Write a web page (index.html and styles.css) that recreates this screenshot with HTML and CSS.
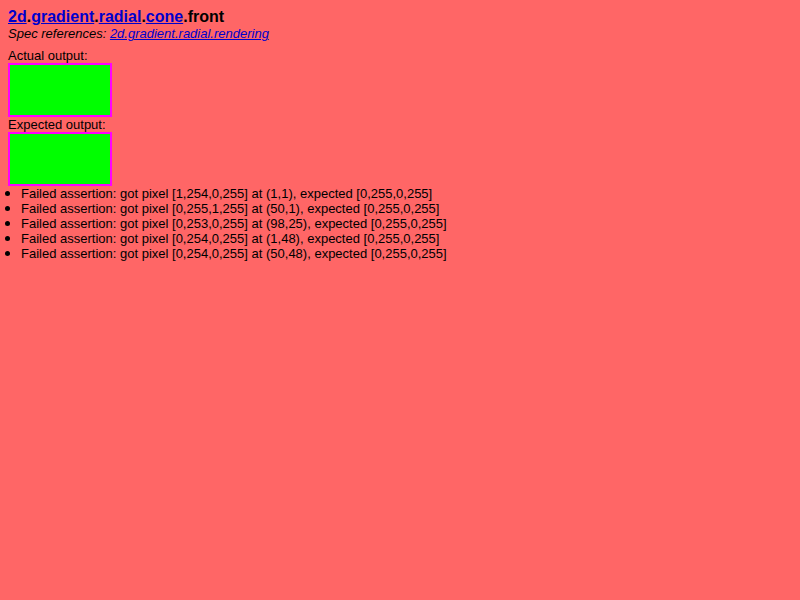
FILE: index.html
```
<!DOCTYPE html>
<html class="fail">
<head>
<meta charset="utf-8">
<title>Canvas test: 2d.gradient.radial.cone.front</title>
<link rel="stylesheet" href="styles.css">
</head>
<body class="show">
<h1><a href="#">2d</a>.<a href="#">gradient</a>.<a href="#">radial</a>.<a href="#">cone</a>.front</h1>
<div class="refs">Spec references: <ul><li><a href="#">2d.gradient.radial.rendering</a></li></ul></div>
<p class="output">Actual output:</p>
<div class="canvas"></div>
<p class="output">Expected output:</p>
<div class="canvas"></div>
<ul class="results">
<li>Failed assertion: got pixel [1,254,0,255] at (1,1), expected [0,255,0,255]</li>
<li>Failed assertion: got pixel [0,255,1,255] at (50,1), expected [0,255,0,255]</li>
<li>Failed assertion: got pixel [0,253,0,255] at (98,25), expected [0,255,0,255]</li>
<li>Failed assertion: got pixel [0,254,0,255] at (1,48), expected [0,255,0,255]</li>
<li>Failed assertion: got pixel [0,254,0,255] at (50,48), expected [0,255,0,255]</li>
</ul>
</body>
</html>
```
FILE: styles.css
```
html.fail { background: #f66; }
body {
  margin: 0;
  padding: 8px;
  font-size: 13px;
  font-family: "Liberation Sans", Arial, sans-serif;
  color: black;
}
a:link, a:visited { color: #00c; }
h1 {
  font-size: 16px;
  font-weight: bold;
  margin: 0;
  padding-left: 0.5em;
  text-indent: -0.5em;
}
p { margin: 0; }
.refs { font-style: italic; margin-bottom: 0.5em; }
.refs ul { display: inline; margin: 0; padding: 0; }
.refs li { display: inline; list-style-type: none; margin: 0; padding: 0; }
.canvas {
  width: 100px;
  height: 50px;
  border: 2px solid #f0f;
  background: #0f0;
}
.results { margin: 0 0 0 -3px; padding: 0; list-style: none; }
.results li { display: flex; }
.results li::before {
  content: "";
  flex: none;
  width: 5px;
  height: 5px;
  border-radius: 50%;
  background: #000;
  margin: 5px 11px 0 0;
}
```
